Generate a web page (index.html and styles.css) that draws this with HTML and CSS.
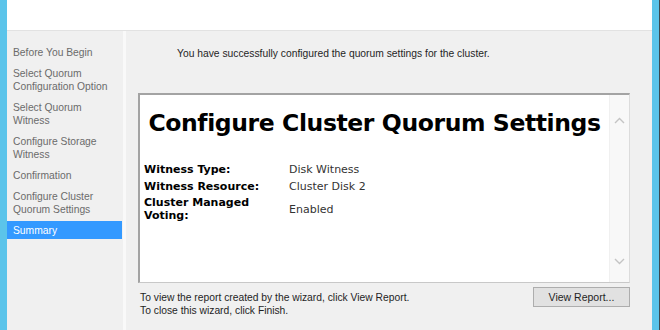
FILE: index.html
```html
<!DOCTYPE html>
<html>
<head>
<meta charset="utf-8">
<link rel="stylesheet" href="styles.css">
</head>
<body>
<div class="window">
  <div class="header"></div>
  <div class="body">
    <nav class="nav">
      <div class="step">Before You Begin</div>
      <div class="step">Select Quorum<br>Configuration Option</div>
      <div class="step">Select Quorum<br>Witness</div>
      <div class="step">Configure Storage<br>Witness</div>
      <div class="step">Confirmation</div>
      <div class="step">Configure Cluster<br>Quorum Settings</div>
      <div class="step active">Summary</div>
    </nav>
    <main class="main">
      <p class="message">You have successfully configured the quorum settings for the cluster.</p>
      <div class="report">
        <div class="report-content">
          <h1 class="report-title">Configure Cluster Quorum Settings</h1>
          <div class="props">
            <div class="label">Witness Type:</div>
            <div class="value">Disk Witness</div>
            <div class="label">Witness Resource:</div>
            <div class="value">Cluster Disk 2</div>
            <div class="label">Cluster Managed Voting:</div>
            <div class="value">Enabled</div>
          </div>
        </div>
        <div class="scrollbar">
          <svg class="arrow" width="11" height="7" viewBox="0 0 11 7"><path d="M1 6 L5.5 1.5 L10 6" fill="none" stroke="#c4c4c4" stroke-width="1.4"/></svg>
          <svg class="arrow" width="11" height="7" viewBox="0 0 11 7"><path d="M1 1 L5.5 5.5 L10 1" fill="none" stroke="#c4c4c4" stroke-width="1.4"/></svg>
        </div>
      </div>
      <div class="footer">
        <div class="hint">To view the report created by the wizard, click View Report.<br>To close this wizard, click Finish.</div>
        <button class="btn">View Report...</button>
      </div>
    </main>
  </div>
</div>
</body>
</html>
```
FILE: styles.css
```css
html, body {
  margin: 0;
  padding: 0;
}
body {
  width: 660px;
  height: 330px;
  overflow: hidden;
  background: #5bc4ea;
  font-family: "Liberation Sans", Arial, sans-serif;
  font-size: 10.3px;
}
.window {
  height: 330px;
  margin-left: 7px;
  margin-right: 8px;
  background: #f0f0f0;
  display: flex;
  flex-direction: column;
  position: relative;
}
.window::after {
  content: "";
  position: absolute;
  top: 0;
  bottom: 0;
  right: -8px;
  width: 1px;
  background: #3b4a52;
}
.header {
  height: 30px;
  background: #ffffff;
  border-bottom: 1px solid #e2e2e2;
  flex: none;
}
.body {
  flex: 1;
  display: flex;
}
.nav {
  width: 116px;
  flex: none;
  border-right: 3px solid #f9f9f9;
  padding-top: 12px;
  display: flex;
  flex-direction: column;
  gap: 3px;
}
.step {
  padding: 3px 6px 2px;
  line-height: 13px;
  color: #6b6b6b;
}
.step.active {
  background: #3399ff;
  color: #ffffff;
  margin-right: 1px;
}
.main {
  flex: 1;
  display: flex;
  flex-direction: column;
  padding: 0 22px 0 12px;
}
.message {
  margin: 16px 0 0 39px;
  line-height: 13px;
  color: #1f1f1f;
}
.report {
  margin-top: 33px;
  height: 187px;
  background: #ffffff;
  border-top: 2px solid #a3a3a3;
  border-left: 2px solid #a3a3a3;
  border-right: 1px solid #dcdcdc;
  border-bottom: 1px solid #c8c8c8;
  display: flex;
}
.report-content {
  flex: 1;
  padding: 13px 4px 0;
  font-family: "DejaVu Sans", Verdana, sans-serif;
}
.report-title {
  margin: 0;
  text-align: center;
  white-space: nowrap;
  font-size: 23.5px;
  letter-spacing: -0.4px;
  line-height: 30px;
  font-weight: bold;
  color: #000000;
}
.props {
  margin-top: 25px;
  display: grid;
  grid-template-columns: 145px 1fr;
  row-gap: 3.6px;
  font-size: 11px;
  line-height: 13px;
  align-items: center;
}
.label {
  font-weight: bold;
  color: #000000;
  padding-right: 25px;
}
.value {
  color: #333333;
}
.scrollbar {
  width: 19px;
  flex: none;
  background: #f8f8f8;
  border-left: 1px solid #f0f0f0;
  display: flex;
  flex-direction: column;
  justify-content: space-between;
  align-items: center;
  padding: 22px 0 17px;
}
.arrow {
  display: block;
}
.footer {
  display: flex;
  justify-content: space-between;
  align-items: flex-start;
}
.hint {
  margin: 8px 0 0 2px;
  line-height: 13px;
  color: #1f1f1f;
}
.btn {
  margin-top: 4px;
  width: 97px;
  height: 20px;
  padding: 0;
  background: #e1e1e1;
  border: 1px solid #adadad;
  font-family: "Liberation Sans", Arial, sans-serif;
  font-size: 10.5px;
  color: #1f1f1f;
}
```
